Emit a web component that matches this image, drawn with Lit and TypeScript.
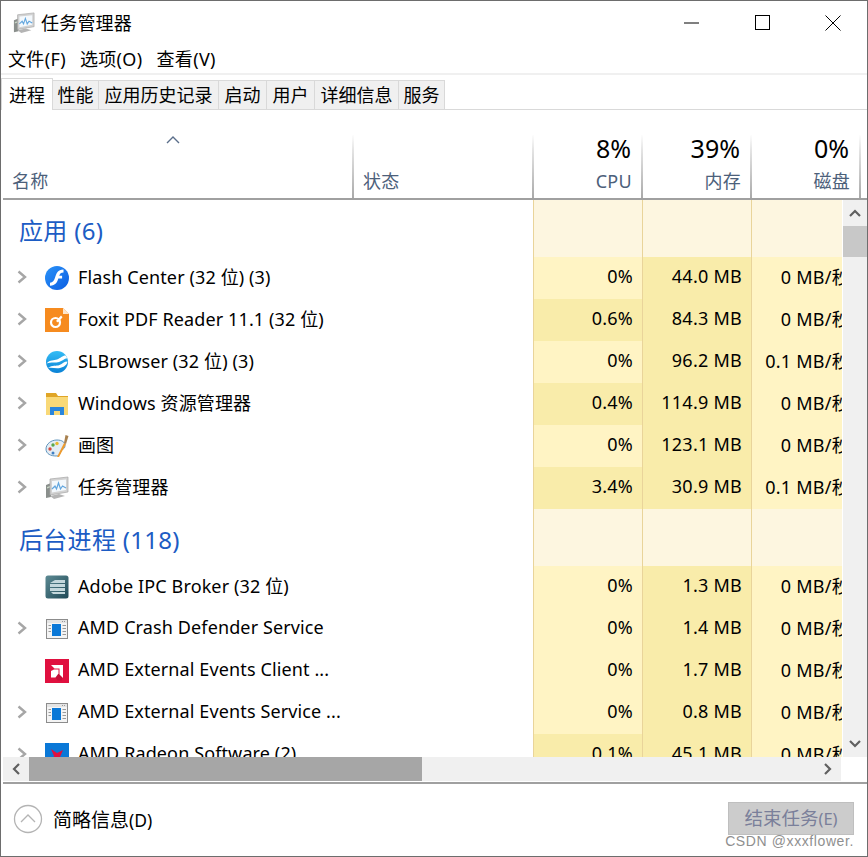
import { LitElement, html, css } from "lit";
import { customElement } from "lit/decorators.js";

type Row = { name: string; icon: string; exp: boolean; cpu: string; mem: string; disk: string; cpuHeat: number };

const apps: Row[] = [
  { name: "Flash Center (32 位) (3)", icon: "flash", exp: true, cpu: "0%", mem: "44.0 MB", disk: "0 MB/秒", cpuHeat: 0 },
  { name: "Foxit PDF Reader 11.1 (32 位)", icon: "foxit", exp: true, cpu: "0.6%", mem: "84.3 MB", disk: "0 MB/秒", cpuHeat: 1 },
  { name: "SLBrowser (32 位) (3)", icon: "sl", exp: true, cpu: "0%", mem: "96.2 MB", disk: "0.1 MB/秒", cpuHeat: 0 },
  { name: "Windows 资源管理器", icon: "folder", exp: true, cpu: "0.4%", mem: "114.9 MB", disk: "0 MB/秒", cpuHeat: 1 },
  { name: "画图", icon: "paint", exp: true, cpu: "0%", mem: "123.1 MB", disk: "0 MB/秒", cpuHeat: 0 },
  { name: "任务管理器", icon: "tm", exp: true, cpu: "3.4%", mem: "30.9 MB", disk: "0.1 MB/秒", cpuHeat: 1 },
];
const bg: Row[] = [
  { name: "Adobe IPC Broker (32 位)", icon: "adobe", exp: false, cpu: "0%", mem: "1.3 MB", disk: "0 MB/秒", cpuHeat: 0 },
  { name: "AMD Crash Defender Service", icon: "svc", exp: true, cpu: "0%", mem: "1.4 MB", disk: "0 MB/秒", cpuHeat: 0 },
  { name: "AMD External Events Client ...", icon: "amd", exp: false, cpu: "0%", mem: "1.7 MB", disk: "0 MB/秒", cpuHeat: 0 },
  { name: "AMD External Events Service ...", icon: "svc", exp: true, cpu: "0%", mem: "0.8 MB", disk: "0 MB/秒", cpuHeat: 0 },
  { name: "AMD Radeon Software (2)", icon: "radeon", exp: true, cpu: "0.1%", mem: "45.1 MB", disk: "0 MB/秒", cpuHeat: 1 },
];

function tmIcon(size: number) {
  return html`<svg width=${size} height=${size} viewBox="0 0 24 24">
    <path d="M1 9l5-2v14l-5 1z" fill="#8a8f8c"/>
    <path d="M2 11l3-1v1.500l-3 1z" fill="#c9d6c6"/>
    <path d="M5 20l9-2 6 2-11 3z" fill="#b4b4b4"/>
    <path d="M5 3l18-2v15L5 19z" fill="#d2d2d2" stroke="#a6a6a6" stroke-width=".7"/>
    <path d="M7 5l14-1.500V14L7 16.500z" fill="#f3f8fc"/>
    <path d="M7 13l3-3 1.500 3 2-6 2 6 2-3 3.500 2" fill="none" stroke="#62a6de" stroke-width="1.200"/>
  </svg>`;
}

function icon(k: string) {
  switch (k) {
    case "flash":
      return html`<svg width="24" height="24" viewBox="0 0 24 24">
        <defs><linearGradient id="fl" x1="0" y1="0" x2="1" y2="1"><stop offset="0" stop-color="#2b93f8"/><stop offset="1" stop-color="#0b5de2"/></linearGradient></defs>
        <circle cx="12" cy="12" r="12" fill="url(#fl)"/>
        <path d="M18.500 3.500v3c-2.600 0-3.600 1.200-4.300 3.300h2.900v2.800h-3.800c-1.200 3.900-2.700 7-8.300 7.100v-3c2.800-.2 4-1.700 5-4.900 1.300-4.300 2.700-8.300 8.500-8.300z" fill="#fff"/>
      </svg>`;
    case "foxit":
      return html`<svg width="24" height="24" viewBox="0 0 24 24">
        <path d="M0 0h18l6 6v18H0z" fill="#f68b1f"/>
        <path d="M18 0l6 6h-6z" fill="#fde6cd"/>
        <circle cx="10.500" cy="14.500" r="4.500" fill="none" stroke="#fff" stroke-width="2.200"/>
        <path d="M11 13l5-5.500 1.500 1.800-4.500 5.200z" fill="#fff"/>
      </svg>`;
    case "sl":
      return html`<svg width="24" height="24" viewBox="0 0 24 24">
        <defs><linearGradient id="slg" x1="0" y1="0" x2="0" y2="1"><stop offset="0" stop-color="#35bdf5"/><stop offset="1" stop-color="#0a82d6"/></linearGradient></defs>
        <circle cx="12" cy="12" r="11" fill="url(#slg)"/>
        <path d="M1.500 13.500C5 9.500 9 10.500 12 9.500c3.500-1.200 5.500-4 8.500-4 .7.800 1.300 1.800 1.700 2.800-3 .4-5 2.700-8.200 3.700-4 1.300-7.500-.2-12.500 1.500z" fill="#fff"/>
        <path d="M3 18c4.500-3.500 8-1.500 11.500-3 3-1.300 4.500-3.500 8-3.500-.3 3-3.500 5.700-7.500 6.500-4 .7-7.500-.5-12 0z" fill="#fff"/>
      </svg>`;
    case "folder":
      return html`<svg width="24" height="24" viewBox="0 0 24 24">
        <path d="M1 1h10l2 3h10v4H1z" fill="#e0a526"/>
        <path d="M1 5h22v18H1z" fill="#f9d978"/>
        <path d="M5 23v-8h14v8h-4v-4H9v4z" fill="#2a86dc"/>
      </svg>`;
    case "paint":
      return html`<svg width="24" height="24" viewBox="0 0 24 24">
        <path d="M1 15c0-5 5-9 11-9 5 0 8 2 8 6 0 3-3 3-4 5s-1 5-5 5c-5 0-10-2-10-7z" fill="#e4edf4" stroke="#5f94bd"/>
        <circle cx="5" cy="15" r="1.700" fill="#d24b3e"/>
        <circle cx="8" cy="11" r="1.700" fill="#5aa84a"/>
        <circle cx="12" cy="9.500" r="1.700" fill="#e8b82e"/>
        <circle cx="8" cy="19" r="1.500" fill="#3f7fc4"/>
        <path d="M12 23l7-14 2 1-7 13z" fill="#ee9a2c"/>
        <path d="M19 9l1.500-8 3 1-2.500 8z" fill="#a8814f"/>
      </svg>`;
    case "tm":
      return tmIcon(24);
    case "adobe":
      return html`<svg width="24" height="24" viewBox="0 0 24 24">
        <defs><linearGradient id="ad" x1="0" y1="0" x2="1" y2="1"><stop offset="0" stop-color="#5d8a93"/><stop offset="1" stop-color="#1f4a57"/></linearGradient></defs>
        <rect x=".5" y=".5" width="23" height="23" rx="2.500" fill="url(#ad)"/>
        <path d="M5 8l5-3h10v3zM5 9h15v3H5zM5 13h15v3H5zM6 17h14v2H8z" fill="#c4d8dc"/>
      </svg>`;
    case "svc":
      return html`<svg width="24" height="24" viewBox="0 0 24 24">
        <rect x="1.500" y="2.500" width="21" height="19" fill="#f4f4f4" stroke="#8c8c8c"/>
        <path d="M2 3h20v3H2z" fill="#e4e4e4"/>
        <rect x="7" y="7" width="9" height="12" fill="#0a78d7"/>
        <path d="M3.500 8H6v1H3.500zM3.500 11H6v1H3.500zM3.500 14H6v1H3.500zM17.500 8H21v1h-3.500zM17.500 11H21v1h-3.500zM17.500 14H21v1h-3.500zM17.500 17H21v1h-3.500zM17 4h1v1h-1zM19 4h1v1h-1z" fill="#9a9a9a"/>
      </svg>`;
    case "amd":
      return html`<svg width="24" height="24" viewBox="0 0 24 24">
        <rect width="24" height="24" fill="#e0103f"/>
        <path d="M6 6h12v13l-3.500-3.500V9.500H9.500z" fill="#fff"/>
        <path d="M6 12l3-1.500h4.500v4l-3 4H6z" fill="#fff"/>
        <path d="M10.500 18.500l3-4 4 4-1 3h-4z" fill="#000" opacity=".12"/>
      </svg>`;
    case "radeon":
      return html`<svg width="24" height="24" viewBox="0 0 24 24">
        <rect width="24" height="24" fill="#0a78d7"/>
        <path d="M6 6l6 4 6-3-3 7 2 5-5-3-5 3 2-6z" fill="#e0103f"/>
      </svg>`;
  }
  return html``;
}

const chevRight = html`<svg width="10" height="14" viewBox="0 0 10 14"><path d="M1.500 1.500L8 7l-6.500 5.500" fill="none" stroke="#a6a6a6" stroke-width="2.400"/></svg>`;

@customElement("app-root")
export class AppRoot extends LitElement {
  static styles = css`
    :host {
      display: block;
      width: 868px;
      height: 857px;
      font-family: "Noto Sans", "Noto Sans CJK SC", sans-serif;
      color: #000;
      background: #fff;
    }
    .win {
      position: relative;
      box-sizing: border-box;
      width: 868px;
      height: 857px;
      border: 1px solid #6d6d6d;
      display: flex;
      flex-direction: column;
      overflow: hidden;
      background: #fff;
    }
    .tint {
      height: 1px;
      margin: -1px -1px 0;
      flex: none;
      background: linear-gradient(90deg, #a5703c 0, #9a6b3f 10%, #5b5b5b 10.100%, #5b5b5b 100%);
    }
    .title {
      flex: none;
      height: 44px;
      display: flex;
      align-items: center;
      padding-left: 12px;
      font-size: 18px;
    }
    .title .app { display: flex; margin-right: 6px; }
    .title .label { margin-bottom: 2px; letter-spacing: .2px; }
    .controls { margin-left: auto; display: flex; height: 44px; align-items: center; }
    .ctl { width: 71px; height: 44px; display: flex; align-items: center; justify-content: center; }
    .ctl:last-child { width: 69px; }
    .menu {
      flex: none;
      height: 28px;
      display: flex;
      align-items: center;
      gap: 14px;
      padding: 0 0 2px 7px;
      box-sizing: border-box;
      font-size: 18px;
      letter-spacing: .35px;
    }
    .sep { flex: none; height: 2px; background: #f0f0f0; }
    .tabs {
      flex: none;
      height: 35px;
      display: grid;
      grid-template-columns: 52px 46px 120px 48px 48px 84px 46px 1fr;
      align-items: end;
      border-bottom: 1px solid #d9d9d9;
      box-sizing: border-box;
      font-size: 18px;
    }
    .tab {
      box-sizing: border-box;
      height: 29px;
      background: #f0f0f0;
      border: 1px solid #d9d9d9;
      border-bottom: none;
      border-left: none;
      display: flex;
      align-items: center;
      justify-content: center;
      line-height: 1;
    }
    .tab.on {
      height: 32px;
      background: #fff;
      border-left: 1px solid #d9d9d9;
      position: relative;
      top: 1px;
    }
    .gap { flex: none; height: 25px; }
    .head {
      flex: none;
      height: 65px;
      margin-left: 2px;
      display: grid;
      grid-template-columns: 351px 180px 109px 109px 109px 1fr;
      border-bottom: 2px solid #a0a0a0;
      box-sizing: border-box;
    }
    .hc {
      box-sizing: border-box;
      border-right: 2px solid;
      border-image: linear-gradient(#ffffff00, #e4e4e4 25%, #a8a8a8) 1;
      display: flex;
      flex-direction: column;
      justify-content: space-between;
      align-items: flex-end;
      padding: 0 9px 5px 9px;
      color: #4c607a;
      font-size: 18px;
      line-height: 24px;
      letter-spacing: .3px;
    }
    .hc.left { align-items: flex-start; justify-content: flex-end; position: relative; }
    .sort { position: absolute; left: 163px; top: 1px; display: flex; }
    .hc .pct { font-size: 25px; line-height: 26px; color: #000; letter-spacing: 0; margin-right: 1px; }
    .hc:last-child { border: none; }
    .mid { flex: none; height: 557px; display: flex; }
    .view { width: 839px; margin-left: 2px; overflow: hidden; flex: none; height: 557px; }
    .grid { width: 860px; display: grid; grid-template-columns: 350px 180px 109px 109px 109px; }
    .cell {
      box-sizing: border-box;
      height: 42px;
      font-size: 18px;
      display: flex;
      align-items: center;
      justify-content: flex-end;
      padding-right: 9px;
      white-space: nowrap;
      border-left: 1px solid #e9d49a;
      background: #fff4c4;
      letter-spacing: .25px;
    }
    .cell span { margin-bottom: 3.500px; }
    .cell.h1, .cell.mem { background: #f9ecaa; }
    .cell.disk { padding-right: 10px; }
    .name {
      grid-column: span 2;
      height: 42px;
      display: flex;
      align-items: center;
      font-size: 18px;
      white-space: nowrap;
      position: relative;
      padding-left: 42px;
      letter-spacing: .12px;
    }
    .name .chev { position: absolute; left: 14px; top: 13px; display: flex; }
    .name .ic { margin-right: 9px; flex: none; display: flex; }
    .name .txt { margin-bottom: 3.500px; }
    .ghead {
      grid-column: span 2;
      height: 57px;
      display: flex;
      align-items: center;
      padding: 2px 0 0 16px;
      box-sizing: border-box;
      font-size: 24px;
      letter-spacing: .3px;
      color: #1c5cc4;
    }
    .gcell { height: 57px; background: #fdf6e0; border-left: 1px solid #e9d49a; box-sizing: border-box; }
    .vbar { flex: none; width: 24px; height: 557px; margin-left: 1px; background: #f0f0f0; display: flex; flex-direction: column; }
    .vbtn { height: 26px; display: flex; align-items: center; justify-content: center; flex: none; }
    .vthumb { height: 31px; background: #c8c8c8; flex: none; }
    .vfill { flex: 1; }
    .hrow { flex: none; height: 24px; margin-left: 2px; width: 838px; display: flex; background: #f0f0f0; }
    .hbtn { width: 26px; display: flex; align-items: center; justify-content: center; flex: none; }
    .hthumb { width: 393px; background: #a6a6a6; flex: none; }
    .hfill { flex: 1; }
    .rule { flex: none; height: 2px; margin: 1px 0 0 2px; background: #a0a0a0; }
    .foot { flex: 1; display: flex; align-items: center; padding: 0 13px 0 12px; font-size: 19px; }
    .foot .circle { margin: 0 10px 2px 0; display: flex; }
    .foot .lbl { margin-bottom: 2px; }
    .small { font-size: 17.500px; }
    .btn {
      margin: 0 0 4px auto;
      box-sizing: border-box;
      width: 126px;
      height: 33px;
      background: #cccccc;
      border: 1px solid #bfbfbf;
      color: #7a7f9a;
      display: flex;
      align-items: center;
      justify-content: center;
      font-size: 18.500px;
      padding-bottom: 2px;
    }
    .btn .small { font-size: 16.500px; }
    .mark { position: absolute; right: 13px; bottom: 7px; font: 14px "Liberation Sans", sans-serif; letter-spacing: .6px; color: #8f8f8f; }
  `;

  private row(r: Row) {
    return html`
      <div class="name">
        ${r.exp ? html`<span class="chev">${chevRight}</span>` : ""}
        <span class="ic">${icon(r.icon)}</span><span class="txt">${r.name}</span>
      </div>
      <div class="cell ${r.cpuHeat ? "h1" : "h0"}"><span>${r.cpu}</span></div>
      <div class="cell mem"><span>${r.mem}</span></div>
      <div class="cell disk"><span>${r.disk}</span></div>
    `;
  }

  private group(title: string, rows: Row[]) {
    return html`
      <div class="ghead">${title}</div>
      <div class="gcell"></div><div class="gcell"></div><div class="gcell"></div>
      ${rows.map((r) => this.row(r))}
    `;
  }

  render() {
    return html`
      <div class="win">
        <div class="tint"></div>
        <div class="title">
          <span class="app">${tmIcon(22)}</span>
          <span class="label">任务管理器</span>
          <div class="controls">
            <div class="ctl"><svg width="16" height="16" viewBox="0 0 16 16"><path d="M0 8h15" stroke="#000"/></svg></div>
            <div class="ctl"><svg width="16" height="16" viewBox="0 0 16 16"><rect x=".5" y=".5" width="14" height="14" fill="none" stroke="#000"/></svg></div>
            <div class="ctl"><svg width="16" height="16" viewBox="0 0 16 16"><path d="M.5.5l15 15M15.500.5l-15 15" stroke="#000" fill="none"/></svg></div>
          </div>
        </div>
        <div class="menu"><span>文件(F)</span><span>选项(O)</span><span>查看(V)</span></div>
        <div class="sep"></div>
        <div class="tabs">
          <div class="tab on">进程</div><div class="tab">性能</div><div class="tab">应用历史记录</div><div class="tab">启动</div><div class="tab">用户</div><div class="tab">详细信息</div><div class="tab">服务</div>
        </div>
        <div class="gap"></div>
        <div class="head">
          <div class="hc left"><span class="sort"><svg width="14" height="8" viewBox="0 0 14 8"><path d="M1 7l6-6 6 6" fill="none" stroke="#5a6e8a" stroke-width="1.400"/></svg></span>名称</div>
          <div class="hc left">状态</div>
          <div class="hc"><span class="pct">8%</span><span>CPU</span></div>
          <div class="hc"><span class="pct">39%</span><span>内存</span></div>
          <div class="hc"><span class="pct">0%</span><span>磁盘</span></div>
          <div class="hc"></div>
        </div>
        <div class="mid">
          <div class="view">
            <div class="grid">
              ${this.group("应用 (6)", apps)}
              ${this.group("后台进程 (118)", bg)}
            </div>
          </div>
          <div class="vbar">
            <div class="vbtn"><svg width="12" height="8" viewBox="0 0 12 8"><path d="M1 7l5-5 5 5" fill="none" stroke="#606060" stroke-width="2.200"/></svg></div>
            <div class="vthumb"></div>
            <div class="vfill"></div>
            <div class="vbtn"><svg width="12" height="8" viewBox="0 0 12 8"><path d="M1 1l5 5 5-5" fill="none" stroke="#606060" stroke-width="2.200"/></svg></div>
          </div>
        </div>
        <div class="hrow">
          <div class="hbtn"><svg width="8" height="12" viewBox="0 0 8 12"><path d="M7 1L2 6l5 5" fill="none" stroke="#606060" stroke-width="2.200"/></svg></div>
          <div class="hthumb"></div>
          <div class="hfill"></div>
          <div class="hbtn"><svg width="8" height="12" viewBox="0 0 8 12"><path d="M1 1l5 5-5 5" fill="none" stroke="#606060" stroke-width="2.200"/></svg></div>
        </div>
        <div class="rule"></div>
        <div class="foot">
          <span class="circle"><svg width="30" height="30" viewBox="0 0 30 30"><circle cx="15" cy="15" r="13.500" fill="none" stroke="#b4b4b4" stroke-width="1.300"/><path d="M8 18l7-7 7 7" fill="none" stroke="#b4b4b4" stroke-width="1.300"/></svg></span>
          <span class="lbl">简略信息<span class="small">(D)</span></span>
          <div class="btn"><span>结束任务<span class="small">(E)</span></span></div>
        </div>
        <div class="mark">CSDN @xxxflower.</div>
      </div>
    `;
  }
}
